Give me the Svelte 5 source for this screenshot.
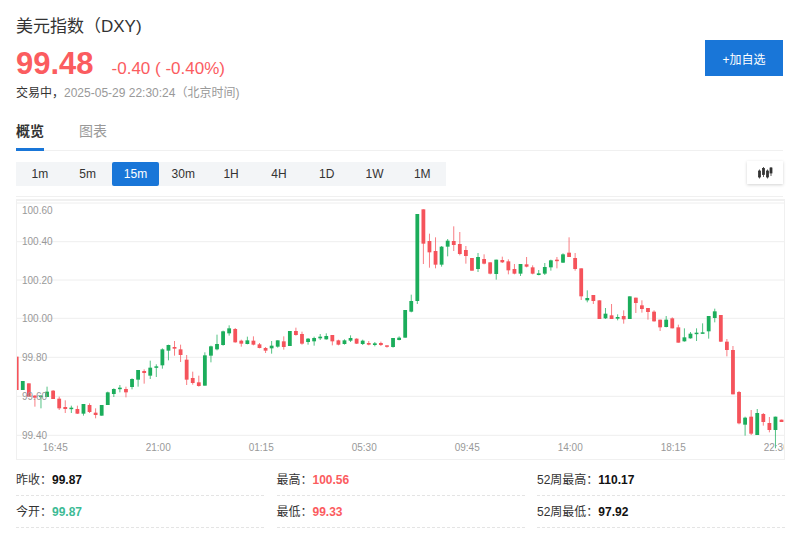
<script>
  const ranges = ["1m", "5m", "15m", "30m", "1H", "4H", "1D", "1W", "1M"];
  let active = $state("15m");
  let tab = $state("概览");

  const grid = [
    { label: "100.60", y: 203, ty: 210 },
    { label: "100.40", y: 241.7, ty: 241 },
    { label: "100.20", y: 280, ty: 280 },
    { label: "100.00", y: 318.3, ty: 318 },
    { label: "99.80", y: 357.3, ty: 357 },
    { label: "99.60", y: 396.3, ty: 396 },
    { label: "99.40", y: 435.3, ty: 435 },
  ];
  const times = ["16:45", "21:00", "01:15", "05:30", "09:45", "14:00", "18:15", "22:30"];

  // [color, bodyTop, bodyBottom, wickTop, wickBottom], measured at 3x from y=195
  const raw = [
    ["r",485,585,485,585],["g",558,585,558,585],["r",565,605,565,605],["r",602,608,600,635],
    ["g",602,606,600,640],["g",590,606,575,606],["r",587,612,585,612],["r",611,640,605,645],
    ["r",636,642,616,654],["g",638,641,632,654],["r",642,656,632,657],["g",627,656,627,662],
    ["r",630,651,625,654],["r",653,660,640,670],["g",630,662,630,662],["g",592,630,590,630],
    ["g",582,597,580,606],["g",578,581,570,592],["r",582,592,575,607],["g",552,576,550,583],
    ["g",525,554,525,575],["r",528,534,523,566],["g",518,542,497,552],["g",514,517,508,546],
    ["g",463,511,460,521],["g",450,467,449,496],["r",456,461,438,482],["r",463,480,449,501],
    ["r",494,554,480,570],["r",549,564,530,569],["r",562,573,542,575],["g",481,572,472,572],
    ["g",454,482,452,502],["g",447,463,419,466],["g",409,450,407,452],["g",400,415,391,422],
    ["r",402,442,399,443],["r",437,446,434,455],["g",436,447,425,448],["r",437,449,424,451],
    ["r",448,459,444,460],["r",459,467,456,474],["g",452,460,438,476],["g",436,455,436,458],
    ["r",439,456,424,464],["g",408,453,408,453],["r",408,420,398,422],["r",417,446,410,449],
    ["g",431,441,429,449],["g",429,439,425,452],["g",425,430,417,435],["g",423,433,415,434],
    ["r",420,439,420,451],["r",436,449,434,451],["g",436,447,433,449],["g",429,437,421,441],
    ["r",431,446,430,447],["g",437,447,434,450],["r",444,449,438,451],["g",445,450,441,454],
    ["r",444,450,440,453],["r",451,453,451,458],["g",429,456,429,458],["g",428,435,424,436],
    ["g",345,428,345,428],["g",318,350,299,352],["g",57,318,57,327],["r",43,146,43,207],
    ["r",138,172,116,218],["r",168,209,127,220],["g",155,209,153,215],["g",137,155,132,184],
    ["r",138,150,94,168],["r",147,177,111,181],["r",165,183,153,206],["r",189,227,189,227],
    ["g",186,222,174,231],["r",192,206,178,208],["r",202,236,202,238],["g",194,237,194,254],
    ["r",195,202,185,204],["r",199,226,193,238],["r",222,236,207,238],["g",207,236,207,243],
    ["r",208,215,186,217],["r",217,236,211,238],["g",235,240,225,241],["g",216,236,204,240],
    ["g",196,217,194,227],["r",194,197,186,220],["g",178,203,175,204],["r",173,186,127,186],
    ["r",189,222,174,227],["r",220,304,220,315],["g",309,316,286,322],["r",300,318,300,327],
    ["r",316,372,316,372],["g",356,370,339,372],["r",361,372,327,372],["g",366,371,358,376],
    ["r",363,373,346,386],["g",304,372,304,372],["r",308,324,308,354],["r",331,342,316,353],
    ["r",339,351,339,374],["r",350,379,346,380],["r",374,397,374,408],["g",374,396,363,397],
    ["r",370,400,367,400],["r",397,443,389,443],["g",427,439,400,440],["g",416,430,411,431],
    ["g",413,415,400,438],["g",412,416,385,416],["g",363,409,363,431],["g",349,369,341,382],
    ["r",360,440,360,441],["r",440,465,432,484],["r",465,598,453,598],["r",591,685,588,688],
    ["g",668,689,665,722],["r",665,716,645,720],["g",654,720,642,720],["r",657,681,654,692],
    ["r",684,705,666,712],["g",665,705,665,760],["r",674,681,674,681],
  ];
  const toY = (v) => 195 + v / 3;
  const candles = raw.map(([c, bt, bb, wt, wb], i) => ({
    color: c === "r" ? "#f5535b" : "#1bad5b",
    x: 16.7 + i * 6.07,
    top: toY(bt),
    h: Math.max((bb - bt) / 3, 1.5),
    wt: toY(wt),
    wb: toY(wb),
  }));

  const stats = [
    { label: "昨收", value: "99.87" },
    { label: "最高", value: "100.56", cls: "up" },
    { label: "52周最高", value: "110.17" },
    { label: "今开", value: "99.87", cls: "open" },
    { label: "最低", value: "99.33", cls: "up" },
    { label: "52周最低", value: "97.92" },
  ];
</script>

<div class="page">
  <div class="head">
    <div>
      <h1>美元指数（DXY)</h1>
      <div class="quote">
        <span class="price">99.48</span>
        <span class="change">-0.40 ( -0.40%)</span>
      </div>
      <div class="status">交易中，<span>2025-05-29 22:30:24（北京时间)</span></div>
    </div>
    <button class="add">+加自选</button>
  </div>

  <div class="tabs">
    {#each ["概览", "图表"] as t}
      <button class="tab" class:on={tab === t} onclick={() => (tab = t)}>{t}</button>
    {/each}
  </div>

  <div class="toolbar">
    <div class="ranges">
      {#each ranges as r}
        <button class="range" class:on={active === r} onclick={() => (active = r)}>{r}</button>
      {/each}
    </div>
    <button class="kind" aria-label="K线">
      <svg width="16" height="14" viewBox="0 0 16 14">
        <g fill="#333" stroke="#333" stroke-width="0.8">
          <path d="M2.5 3.5v9M6.5 1v10M10.5 3.5v9M14 1v9" fill="none" />
          <rect x="1.5" y="5" width="2" height="6" />
          <rect x="5.5" y="2.5" width="2" height="6" />
          <rect x="9.5" y="5" width="2" height="6" />
          <rect x="13" y="2" width="2" height="5" />
        </g>
      </svg>
    </button>
  </div>

  <div class="chart">
    <svg width="767" height="258" viewBox="17 201 767 258">
      {#each grid as g}
        <line x1="17" x2="784" y1={g.y} y2={g.y} stroke="#eee" />
      {/each}
      {#each candles as c}
        <line x1={c.x} x2={c.x} y1={c.wt} y2={c.wb} stroke={c.color} stroke-opacity="0.75" />
        <rect x={c.x - 1.9} y={c.top} width="3.8" height={c.h} fill={c.color} />
      {/each}
      {#each grid as g}
        <text x="22" y={g.ty + 3.6} class="axis">{g.label}</text>
      {/each}
      {#each times as t, i}
        <text x={55.2 + i * 103} y="450.5" class="axis" text-anchor="middle">{t}</text>
      {/each}
    </svg>
  </div>

  <div class="stats">
    {#each stats as s}
      <div class="stat">{s.label}：<b class={s.cls}>{s.value}</b></div>
    {/each}
  </div>
</div>

<style>
  :global(body) {
    margin: 0;
    background: #fff;
  }
  .page {
    width: 800px;
    height: 542px;
    overflow: hidden;
    box-sizing: border-box;
    padding: 16px 16px 0;
    font-family: "Liberation Sans", "Noto Sans CJK SC", sans-serif;
    color: #333;
  }
  button {
    font-family: inherit;
    border: 0;
    padding: 0;
    background: none;
    cursor: pointer;
  }
  .head {
    display: flex;
    justify-content: space-between;
    height: 85px;
  }
  h1 {
    margin: 0;
    font-size: 17px;
    line-height: 22px;
    font-weight: 400;
  }
  .quote {
    display: flex;
    align-items: baseline;
    height: 40px;
    margin-top: 6px;
  }
  .price {
    font-size: 31px;
    line-height: 40px;
    font-weight: 700;
    color: #fb5c5f;
  }
  .change {
    margin-left: 18px;
    font-size: 17px;
    color: #fb5c5f;
  }
  .status {
    font-size: 12px;
    line-height: 16px;
    margin-top: 1px;
  }
  .status span {
    color: #999;
  }
  .add {
    width: 78px;
    height: 36px;
    margin-top: 24px;
    margin-right: 1px;
    background: #1976d8;
    color: #fff;
    font-size: 12px;
  }
  .tabs {
    display: flex;
    gap: 35px;
    height: 50px;
    box-sizing: border-box;
    border-bottom: 1px solid #f0f0f0;
    padding-top: 20px;
    margin-right: 1px;
  }
  .tab {
    height: 30px;
    font-size: 14px;
    line-height: 20px;
    color: #999;
    padding-bottom: 7px;
    border-bottom: 3px solid transparent;
    box-sizing: border-box;
  }
  .tab.on {
    color: #333;
    font-weight: 700;
    border-bottom-color: #1976d8;
  }
  .toolbar {
    display: flex;
    justify-content: space-between;
    align-items: flex-start;
    height: 46px;
    box-sizing: border-box;
    padding-top: 11px;
    border-bottom: 1px solid #f0f0f0;
    margin-right: 1px;
  }
  .ranges {
    display: flex;
    background: #f3f5f7;
    height: 24px;
  }
  .range {
    width: 47.8px;
    height: 24px;
    font-size: 12px;
    color: #333;
    border-radius: 2px;
  }
  .range.on {
    background: #1976d8;
    color: #fff;
  }
  .kind {
    width: 36px;
    height: 23px;
    margin-top: -1px;
    display: flex;
    align-items: center;
    justify-content: center;
    background: #fff;
    box-shadow: 0 1px 3px rgba(0, 0, 0, 0.18);
  }
  .chart {
    margin-top: 2px;
    height: 261px;
    box-sizing: border-box;
    border: 1px solid #f0f0f0;
    border-top-width: 2px;
    margin-right: -1px;
    overflow: hidden;
  }
  .chart svg {
    display: block;
  }
  .axis {
    font-size: 10px;
    fill: #999;
  }
  .stats {
    display: grid;
    grid-template-columns: repeat(3, 248px);
    column-gap: 12.5px;
  }
  .stat {
    padding-top: 4px;
    box-sizing: border-box;
    line-height: 32px;
    height: 36px;
    font-size: 12px;
    border-bottom: 1px dashed #e4e4e4;
    color: #333;
  }
  .stat:nth-child(n + 4) {
    height: 32px;
    padding-top: 0;
  }
  .stat b {
    color: #111;
  }
  .stat b.up {
    color: #fb5c5f;
  }
  .stat b.open {
    color: #3dbb95;
  }
</style>
